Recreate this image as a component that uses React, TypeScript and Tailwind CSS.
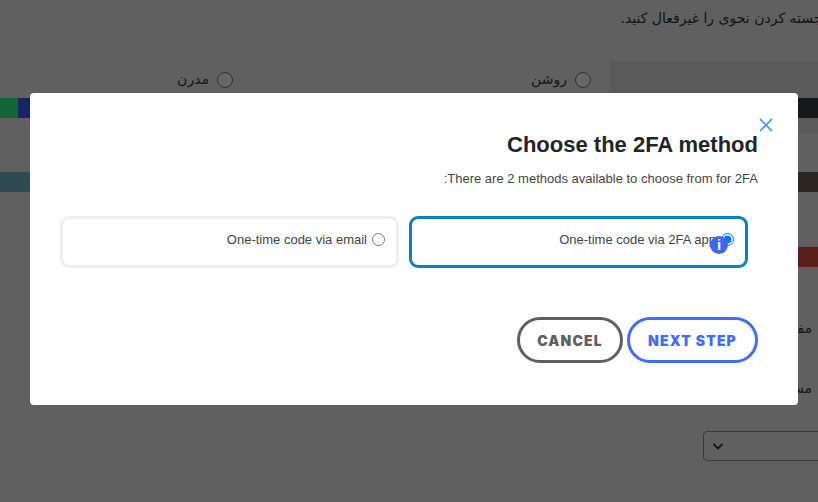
/**
 * App - 2FA method dialog on top of a dimmed settings page.
 */
import { useState } from "react";

const sans = "font-['Liberation_Sans',Arial,sans-serif]";
const arabic = "font-['DejaVu_Sans',sans-serif]";

function ThemeOption({ label, className }: { label: string; className: string }) {
  return (
    <label className={`flex items-center gap-2 text-[14px] text-[#33333a] ${className}`}>
      <input type="radio" name="theme" className="m-0 h-4 w-4" />
      <span>{label}</span>
    </label>
  );
}

function Background() {
  return (
    <div className={`h-[502px] w-[818px] overflow-hidden bg-[#f1f1f1] ${arabic}`} dir="ltr">
      <div className="flex h-[61px] justify-end overflow-hidden pt-[8px]">
        <p className="mr-[-16px] whitespace-nowrap text-[14px] text-[#33333a]" dir="rtl">
          برجسته کردن نحوی را غیرفعال کنید.
        </p>
      </div>
      <div className="flex">
        <div className="w-[610px]">
          <div className="flex h-[37px] items-end pb-[8px] pr-[19px]" dir="rtl">
            <ThemeOption label="روشن" className="w-[358px]" />
            <ThemeOption label="مدرن" className="" />
          </div>
          <div className="flex h-5">
            <div className="w-[18px] bg-[#32fa8a]" />
            <div className="w-[20px] bg-[#3c58fa]" />
          </div>
          <div className="mt-[54px] h-5 w-[40px] bg-[#76b8c8]" />
        </div>
        <div className="w-[208px]">
          <div className="h-[37px] bg-[#e1e1e1]" />
          <div className="h-5 bg-[#373c41]" />
          <div className="h-[15px] bg-[#e1e1e1]" />
          <div className="mt-[39px] h-5 bg-[#6b5f55]" />
          <div className="mt-[55px] h-5 bg-[#e14b46]" />
          <div className="mt-[51px] flex justify-end text-[14px] text-[#33333a]">
            <span className="mr-[6px]" dir="rtl">مف</span>
          </div>
          <div className="mt-[39px] flex justify-end text-[14px] text-[#33333a]">
            <span className="mr-[6px]" dir="rtl">مش</span>
          </div>
          <div className="ml-[93px] mt-[32px] flex h-[30px] w-[130px] items-center rounded border border-[#8f8f8f] pl-[8px]">
            <svg width="12" height="12" viewBox="0 0 12 12" fill="none" stroke="#333" strokeWidth="1.8">
              <path d="M1.5 4l4.5 4.5L10.5 4" />
            </svg>
          </div>
        </div>
      </div>
    </div>
  );
}

interface MethodCardProps {
  label: string;
  selected: boolean;
  onSelect: () => void;
  showInfo?: boolean;
}

function MethodCard({ label, selected, onSelect, showInfo }: MethodCardProps) {
  return (
    <label
      className={`relative flex h-[52px] w-[339px] cursor-pointer justify-end gap-[5px] rounded-[9px] border-[3px] pr-[11px] pt-[13px] text-[13px] leading-[16px] text-[#444] ${
        selected ? "border-[#0a83bb]" : "border-[#eeeeee]"
      }`}
    >
      <span>{label}</span>
      <input type="radio" name="method" checked={selected} onChange={onSelect} className="m-0 mt-[1px] h-[13px] w-[13px]" />
      {showInfo && (
        <span className="absolute right-[17px] top-[17px] flex h-[18px] w-[18px] items-center justify-center rounded-full bg-[#3d66f6] text-[15px] font-bold text-white">
          i
        </span>
      )}
    </label>
  );
}

export default function App() {
  const [method, setMethod] = useState<"app" | "email">("app");

  return (
    <div className="h-[502px] w-[818px] overflow-hidden">
      <Background />
      <div className="fixed inset-0 bg-black/60 px-[20px] pt-[93px]">
        <div className={`ml-[10px] h-[312px] w-[768px] rounded bg-white ${sans}`}>
          <div className="flex justify-end pr-[25px] pt-[25px]">
            <svg width="14" height="14" viewBox="0 0 14 14" stroke="#4b9dff" strokeWidth="1.8">
              <path d="M1 1l12 12M13 1L1 13" />
            </svg>
          </div>
          <h2 className="mt-[-1px] pr-[40px] text-right text-[22px] font-bold leading-[28px] text-[#212529]">
            Choose the 2FA method
          </h2>
          <p className="mt-[10px] pr-[40px] text-right text-[13px] leading-[20px] text-[#444]" dir="rtl">
            There are 2 methods available to choose from for 2FA:
          </p>
          <div className="mt-[27px] flex justify-end gap-[10px] pr-[50px]">
            <MethodCard label="One-time code via email" selected={method === "email"} onSelect={() => setMethod("email")} />
            <MethodCard label="One-time code via 2FA app" selected={method === "app"} onSelect={() => setMethod("app")} showInfo />
          </div>
          <div className="mt-[49px] flex justify-end gap-[4px] pr-[40px]">
            <button className="h-[46px] w-[106px] rounded-full border-[3px] border-[#5f5f5f] font-['Inter',sans-serif] text-[14px] font-black tracking-[1.1px] text-[#5f5f5f]">
              CANCEL
            </button>
            <button className="h-[46px] w-[131px] rounded-full border-[3px] border-[#3f6bff] font-['Inter',sans-serif] text-[14px] font-black tracking-[1.1px] text-[#3f6bff]">
              NEXT STEP
            </button>
          </div>
        </div>
      </div>
    </div>
  );
}
